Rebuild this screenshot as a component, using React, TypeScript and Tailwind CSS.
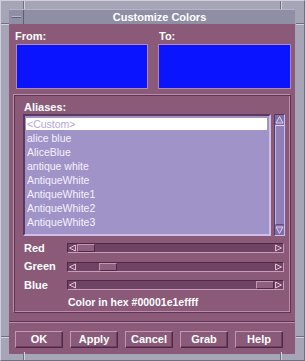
import React from "react"

const aliases = [
  "alice blue",
  "AliceBlue",
  "antique white",
  "AntiqueWhite",
  "AntiqueWhite1",
  "AntiqueWhite2",
  "AntiqueWhite3",
]

const sliders = [
  { label: "Red", thumb: "ml-0" },
  { label: "Green", thumb: "ml-[22px]" },
  { label: "Blue", thumb: "ml-[179px]" },
]

const buttons = ["OK", "Apply", "Cancel", "Grab", "Help"]

const SliderArrow = ({ dir }: { dir: "left" | "right" }) => (
  <svg width="9" height="8" viewBox="0 0 9 8" className="shrink-0">
    {dir === "left" ? (
      <>
        <path d="M1.5 4 L7.5 1 L7.5 7 Z" fill="#7c4d6d" />
        <path d="M7.5 1 L1.5 4" stroke="#e0bcd4" strokeWidth="1" fill="none" />
        <path d="M1.5 4 L7.5 7 L7.5 1" stroke="#e0bcd4" strokeWidth="1" fill="none" />
      </>
    ) : (
      <>
        <path d="M7.5 4 L1.5 1 L1.5 7 Z" fill="#7c4d6d" />
        <path d="M1.5 7 L1.5 1 L7.5 4 L1.5 7" stroke="#e0bcd4" strokeWidth="1" fill="none" />
      </>
    )}
  </svg>
)

const Slider = ({ label, thumb }: { label: string; thumb: string }) => (
  <div className="flex items-center h-[10px]">
    <div className="w-[44px] pl-[1px] text-[11px] font-bold text-white leading-[13px]">{label}</div>
    <div className="w-[217px] h-[10px] flex items-center bg-[#6e4363] border border-t-[#4c2945] border-l-[#4c2945] border-b-[#c99cbb] border-r-[#c99cbb]">
      <SliderArrow dir="left" />
      <div className="flex-1 h-[8px] flex">
        <div className={`${thumb} w-[18px] h-[8px] bg-[#8f5f7f] border border-t-[#c396b4] border-l-[#c396b4] border-b-[#4e2847] border-r-[#4e2847]`} />
      </div>
      <SliderArrow dir="right" />
    </div>
  </div>
)

const App = () => {
  return (
    <div className="relative w-[305px] h-[361px] bg-[#a5a5b7] pt-[8px] pl-[8px] pr-[9px] pb-[8px] flex flex-col font-['Liberation_Sans',Arial,sans-serif] border border-t-[#cfcfdc] border-l-[#cfcfdc] border-b-[#6f6f82] border-r-[#6f6f82]">
      {/* resize corner marks on the frame */}
      <div className="absolute top-0 left-[22px] w-[2px] h-[8px] border-l border-l-[#6f6f82] border-r border-r-[#d2d2de]" />
      <div className="absolute top-0 left-[279px] w-[2px] h-[8px] border-l border-l-[#6f6f82] border-r border-r-[#d2d2de]" />
      <div className="absolute bottom-0 left-[22px] w-[2px] h-[8px] border-l border-l-[#6f6f82] border-r border-r-[#d2d2de]" />
      <div className="absolute bottom-0 left-[279px] w-[2px] h-[8px] border-l border-l-[#6f6f82] border-r border-r-[#d2d2de]" />
      <div className="absolute left-0 top-[22px] w-[8px] h-[2px] border-t border-t-[#6f6f82] border-b border-b-[#d2d2de]" />
      <div className="absolute left-0 top-[335px] w-[8px] h-[2px] border-t border-t-[#6f6f82] border-b border-b-[#d2d2de]" />
      <div className="absolute right-0 top-[22px] w-[8px] h-[2px] border-t border-t-[#6f6f82] border-b border-b-[#d2d2de]" />
      <div className="absolute right-0 top-[335px] w-[8px] h-[2px] border-t border-t-[#6f6f82] border-b border-b-[#d2d2de]" />

      {/* title bar */}
      <div className="h-[15px] flex bg-[#8e8ea5] border-t border-t-[#b4b4c6] shrink-0">
        <div className="w-[15px] h-full flex items-center justify-center border-r border-r-[#5f5f74]">
          <div className="w-[9px] h-[2px] bg-[#b8b8ca] border-b border-b-[#5f5f74]" />
        </div>
        <div className="flex-1 text-center text-white font-bold text-[11px] leading-[14px]">Customize Colors</div>
      </div>

      {/* dialog body */}
      <div className="flex-1 bg-[#8b5a79] flex flex-col pt-[6px] pb-[6px]">
        <div className="grid grid-cols-[132px_133px] gap-x-[10px] pl-[7px]">
          <div className="h-[13px] -ml-[1px] text-[11px] font-bold text-white leading-[13px]">From:</div>
          <div className="h-[13px] ml-[1px] text-[11px] font-bold text-white leading-[13px]">To:</div>
          <div className="mt-[1px] h-[45px] bg-[#0a14ff] border border-[#b08aa6]" />
          <div className="mt-[1px] h-[45px] bg-[#0a14ff] border border-[#b08aa6]" />
        </div>

        {/* aliases group */}
        <div className="mt-[5px] mx-[4px] h-[219px] border border-t-[#b98dab] border-l-[#b98dab] border-b-[#5e3555] border-r-[#5e3555] shadow-[inset_1px_1px_0_#5e3555,inset_-1px_-1px_0_#b98dab] pt-[6px] pl-[9px] flex flex-col">
          <div className="h-[13px] ml-[1px] text-[11px] font-bold text-white leading-[13px]">Aliases:</div>
          <div className="flex h-[122px]">
            <div className="w-[248px] h-[122px] bg-[#9f93c7] border-2 border-t-[#5a3860] border-l-[#5a3860] border-b-[#cdbfe8] border-r-[#cdbfe8] pt-[1px] pl-[1px] pr-[2px] overflow-hidden">
              <div className="h-[14px] bg-white border-y border-y-[#9f93c7] pl-[1px] text-[10.5px] leading-[12px] text-[#b3a6da]">&lt;Custom&gt;</div>
              {aliases.map((a) => (
                <div key={a} className="h-[14px] pl-[1px] text-[10.5px] leading-[14px] text-[#f6f2ff]">
                  {a}
                </div>
              ))}
            </div>
            <div className="ml-[3px] w-[11px] h-[122px] bg-[#7d6da6] border border-t-[#5a3860] border-l-[#5a3860] border-b-[#cdbfe8] border-r-[#cdbfe8] flex flex-col">
              <svg width="9" height="10" viewBox="0 0 9 10" className="shrink-0">
                <path d="M4.5 1.5 L8 8 L1 8 Z" fill="#8e7fb8" stroke="#d9cff0" strokeWidth="1" />
              </svg>
              <div className="flex-1 mx-0 bg-[#8e7fb8] border-t border-t-[#e0d7f4] border-l border-l-[#c4b8e4] border-b border-b-[#5e4d88]" />
              <svg width="9" height="10" viewBox="0 0 9 10" className="shrink-0">
                <path d="M1 2 L8 2 L4.5 8.5 Z" fill="#8e7fb8" stroke="#d9cff0" strokeWidth="1" />
              </svg>
            </div>
          </div>
          <div className="mt-[7px] flex flex-col gap-[8.5px]">
            {sliders.map((s) => (
              <Slider key={s.label} label={s.label} thumb={s.thumb} />
            ))}
          </div>
          <div className="mt-[6px] pl-[45px] h-[13px] text-[10.5px] font-bold text-white leading-[13px]">
            Color in hex #00001e1effff
          </div>
        </div>

        <div className="mt-[8px] h-[2px] border-t border-t-[#5e3555] border-b border-b-[#b98dab]" />

        <div className="mt-[8px] pl-[6px] flex gap-[7px]">
          {buttons.map((b) => (
            <div
              key={b}
              className="w-[48px] h-[17px] flex items-center justify-center bg-[#8b5a79] border border-t-[#c297b5] border-l-[#c297b5] border-b-[#4e2847] border-r-[#4e2847] shadow-[inset_-1px_-1px_0_#6b3f5f] text-[11px] font-bold text-white leading-[13px]"
            >
              {b}
            </div>
          ))}
        </div>
      </div>
    </div>
  )
}

export default App
